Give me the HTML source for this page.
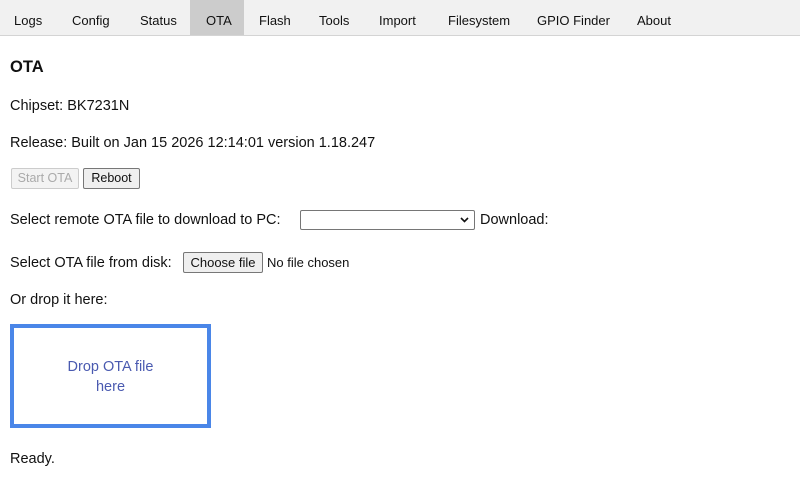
<!DOCTYPE html>
<html><head><meta charset="utf-8"><style>
*{margin:0;padding:0;box-sizing:border-box}
body{width:800px;height:494px;background:#fff;font-family:"Liberation Sans",sans-serif;color:#111;position:relative;overflow:hidden}
.bar{position:absolute;left:0;top:0;width:800px;height:36px;background:#f1f1f1;border-bottom:1px solid #d4d4d4}
.t{position:absolute;top:13px;font-size:13px;color:#111;white-space:nowrap}
.act{position:absolute;left:190px;top:0;width:54px;height:35px;background:#cccccc}
.a{position:absolute;left:10px;white-space:nowrap;font-size:14.5px}
.btn{position:absolute;font-size:12.5px;border:1px solid #777;border-radius:2px;background:#efefef;text-align:center;line-height:19px;height:21px}
</style></head><body>
<div class="bar"></div>
<div class="act"></div>
<span class="t" style="left:14px">Logs</span>
<span class="t" style="left:72px">Config</span>
<span class="t" style="left:140px">Status</span>
<span class="t" style="left:206px">OTA</span>
<span class="t" style="left:259px">Flash</span>
<span class="t" style="left:319px">Tools</span>
<span class="t" style="left:379px">Import</span>
<span class="t" style="left:448px">Filesystem</span>
<span class="t" style="left:537px">GPIO Finder</span>
<span class="t" style="left:637px">About</span>

<div class="a" style="top:58px;font-size:16.5px;font-weight:bold">OTA</div>
<div class="a" style="top:98px">Chipset: BK7231N</div>
<div class="a" style="top:135px">Release: Built on Jan 15 2026 12:14:01 version 1.18.247</div>
<div class="btn" style="left:11px;top:168px;width:68px;color:#aaa;border-color:#ccc;background:#f3f3f3">Start OTA</div>
<div class="btn" style="left:83px;top:168px;width:57px">Reboot</div>

<div class="a" style="top:212px">Select remote OTA file to download to PC:</div>
<div style="position:absolute;left:300px;top:210px;width:175px;height:20px;border:1px solid #767676;border-radius:2px;background:#fff">
<svg style="position:absolute;right:5px;top:6px" width="9" height="6" viewBox="0 0 9 6"><path d="M1 1l3.5 3.5L8 1" stroke="#111" stroke-width="1.6" fill="none"/></svg></div>
<div class="a" style="left:480px;top:212px">Download:</div>

<div class="a" style="top:255px">Select OTA file from disk:</div>
<div class="btn" style="left:183px;top:252px;width:80px;height:21px;font-size:13px">Choose file</div>
<div class="a" style="left:267px;top:255px;font-size:13px">No file chosen</div>

<div class="a" style="top:292px">Or drop it here:</div>
<div style="position:absolute;left:10px;top:324px;width:201px;height:104px;border:4px solid #4a86e8"></div>
<div style="position:absolute;left:10px;top:357px;width:201px;text-align:center;color:#4a5ab0;font-size:14.5px;line-height:20px">Drop OTA file<br>here</div>

<div class="a" style="top:451px">Ready.</div>
</body></html>
